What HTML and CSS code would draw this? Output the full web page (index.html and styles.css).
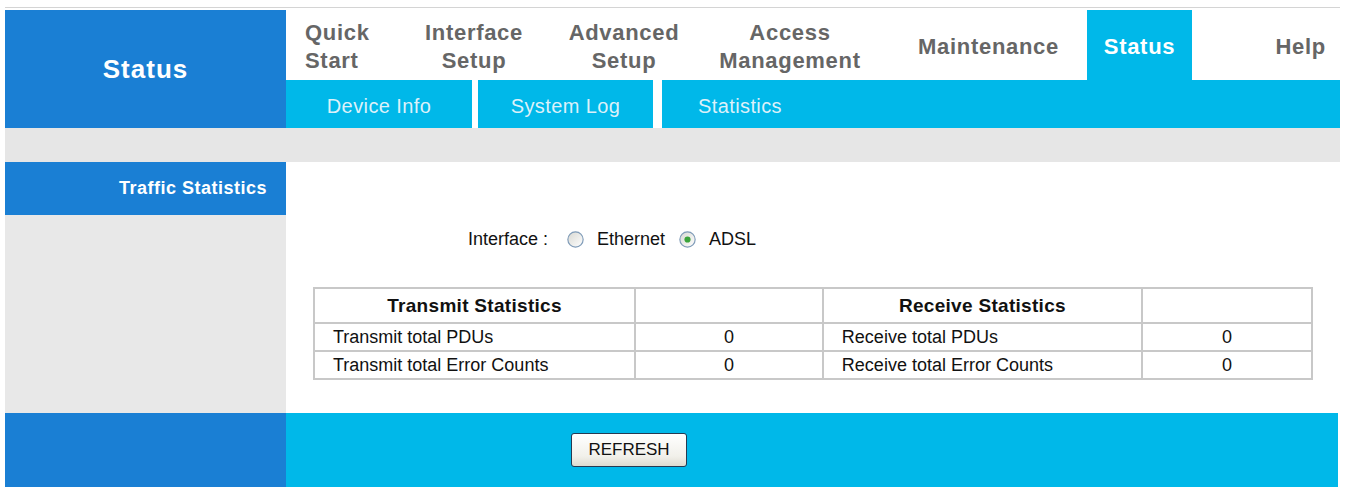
FILE: index.html
```html
<!DOCTYPE html>
<html lang="en">
<head>
<meta charset="utf-8">
<title>Status - Traffic Statistics</title>
<link rel="stylesheet" href="styles.css">
</head>
<body>
<div class="page">
  <header class="top">
    <div class="brand">Status</div>
    <div class="navwrap">
      <nav class="mainnav">
        <a class="item item-left">Quick<br>Start</a>
        <a class="item">Interface<br>Setup</a>
        <a class="item">Advanced<br>Setup</a>
        <a class="item">Access<br>Management</a>
        <a class="item item-maint">Maintenance</a>
        <a class="item item-active">Status</a>
        <a class="item item-right">Help</a>
      </nav>
      <nav class="subnav">
        <a class="sub sub-device">Device Info</a>
        <a class="sub sub-log">System Log</a>
        <a class="sub sub-stats">Statistics</a>
      </nav>
    </div>
  </header>
  <div class="band"></div>
  <section class="main">
    <aside class="side">
      <div class="sidehead">Traffic Statistics</div>
    </aside>
    <div class="content">
      <div class="iface">
        <span class="iface-label">Interface :</span>
        <svg class="radio" viewBox="0 0 16 16">
          <defs>
            <linearGradient id="rg" x1="0" y1="0" x2="1" y2="1">
              <stop offset="0" stop-color="#d8d8d2"/>
              <stop offset="1" stop-color="#ffffff"/>
            </linearGradient>
          </defs>
          <circle cx="8" cy="8" r="7.2" fill="url(#rg)" stroke="#7f9bb8" stroke-width="1.1"/>
        </svg>
        <span class="iface-opt">Ethernet</span>
        <svg class="radio" viewBox="0 0 16 16">
          <circle cx="8" cy="8" r="7.2" fill="url(#rg)" stroke="#7f9bb8" stroke-width="1.1"/>
          <circle cx="8" cy="8" r="2.9" fill="#3ba43b"/>
        </svg>
        <span class="iface-opt">ADSL</span>
      </div>
      <table class="stats">
        <tr class="head">
          <th class="c1">Transmit Statistics</th>
          <th class="c2"></th>
          <th class="c3">Receive Statistics</th>
          <th class="c4"></th>
        </tr>
        <tr>
          <td class="lbl">Transmit total PDUs</td>
          <td class="num">0</td>
          <td class="lbl">Receive total PDUs</td>
          <td class="num">0</td>
        </tr>
        <tr>
          <td class="lbl">Transmit total Error Counts</td>
          <td class="num">0</td>
          <td class="lbl">Receive total Error Counts</td>
          <td class="num">0</td>
        </tr>
      </table>
    </div>
  </section>
  <footer class="foot">
    <div class="foot-left"></div>
    <div class="foot-right">
      <button class="btn" type="button">REFRESH</button>
    </div>
  </footer>
</div>
</body>
</html>
```

FILE: styles.css
```css
html, body {
  margin: 0;
  padding: 0;
  background: #ffffff;
}

body {
  font-family: "Liberation Sans", Arial, sans-serif;
  color: #111111;
}

.page {
  margin: 7px 0 0 5px;
  width: 1335px;
  border-top: 1px solid #d4d4d4;
  padding-top: 2px;
}

/* ---------- header ---------- */
.top {
  display: grid;
  grid-template-columns: 281px 1fr;
}

.brand {
  background: #1a7fd4;
  color: #ffffff;
  font-weight: bold;
  font-size: 26px;
  letter-spacing: 1px;
  display: flex;
  align-items: center;
  justify-content: center;
  height: 118px;
}

.navwrap {
  display: flex;
  flex-direction: column;
}

.mainnav {
  display: grid;
  grid-template-columns: 114px 148px 152px 180px 207px 105px 148px;
  height: 70px;
  background: #ffffff;
}

.item {
  display: flex;
  align-items: center;
  justify-content: center;
  text-align: center;
  color: #666666;
  font-weight: bold;
  font-size: 22px;
  line-height: 28px;
  letter-spacing: 0.7px;
  padding-top: 3px;
}

.item-left {
  justify-content: flex-start;
  text-align: left;
  padding-left: 19px;
}

.item-maint {
  padding-left: 10px;
}

.item-active {
  background: #00b8e9;
  color: #ffffff;
}

.item-right {
  justify-content: flex-end;
  padding-right: 14px;
}

.subnav {
  display: flex;
  height: 48px;
  background: #00b8e9;
}

.sub {
  display: flex;
  align-items: center;
  justify-content: center;
  color: #dcf1fa;
  font-size: 20px;
  letter-spacing: 0.4px;
  padding-top: 4px;
  box-sizing: border-box;
}

.sub-device {
  width: 192px;
  border-right: 6px solid #ffffff;
}

.sub-log {
  width: 184px;
  border-right: 9px solid #ffffff;
}

.sub-stats {
  width: 156px;
}

/* ---------- band ---------- */
.band {
  height: 34px;
  background: #e6e6e6;
}

/* ---------- main ---------- */
.main {
  display: grid;
  grid-template-columns: 281px 1fr;
  height: 251px;
}

.side {
  background: #e8e8e8;
}

.sidehead {
  background: #1a7fd4;
  color: #ffffff;
  font-weight: bold;
  font-size: 18px;
  letter-spacing: 0.5px;
  height: 53px;
  display: flex;
  align-items: center;
  justify-content: flex-end;
  padding-right: 19px;
}

.content {
  background: #ffffff;
}

.iface {
  display: flex;
  align-items: center;
  margin-top: 66px;
  padding-left: 182px;
  height: 22px;
  font-size: 18px;
  color: #111111;
}

.iface-label {
  margin-right: 19px;
}

.radio {
  width: 17px;
  height: 17px;
  flex: 0 0 17px;
  margin-right: 13px;
}

.iface-opt {
  margin-right: 14px;
}

.stats {
  margin: 37px 0 0 27px;
  width: 1000px;
  border-collapse: collapse;
  border: 2px solid #c8c8c8;
  font-size: 18px;
}

.stats th,
.stats td {
  border: 2px solid #c8c8c8;
  padding: 0;
}

.stats th {
  height: 33px;
  font-size: 19px;
  font-weight: bold;
  letter-spacing: 0.3px;
  text-align: center;
  color: #111111;
}

.stats td {
  height: 26px;
}

.stats .c1 { width: 322px; }
.stats .c2 { width: 188px; }
.stats .c3 { width: 320px; }
.stats .c4 { width: 170px; }

.stats .lbl {
  text-align: left;
  padding-left: 18px;
}

.stats .num {
  text-align: center;
}

/* ---------- footer ---------- */
.foot {
  display: grid;
  grid-template-columns: 281px 1fr;
  height: 74px;
}

.foot-left {
  background: #1a7fd4;
}

.foot-right {
  background: #00b8e9;
  display: flex;
  align-items: center;
  padding-left: 285px;
  margin-right: 2px;
}

.btn {
  width: 116px;
  height: 34px;
  font-family: "Liberation Sans", Arial, sans-serif;
  font-size: 17px;
  color: #111111;
  background: linear-gradient(#ffffff, #f1f0ea 70%, #dedbd0);
  border: 1px solid #263a52;
  border-radius: 3px;
  padding: 0;
}
```
